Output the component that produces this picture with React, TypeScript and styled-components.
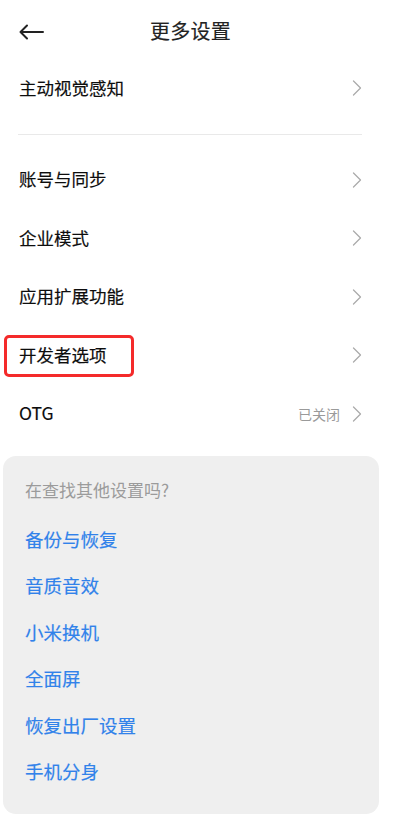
import React from "react";
import styled, { createGlobalStyle } from "styled-components";

const Global = createGlobalStyle`
  html, body { margin: 0; padding: 0; background: #ffffff; }
  body { font-family: "Noto Sans CJK SC", "Noto Sans", Roboto, sans-serif; -webkit-font-smoothing: antialiased; }
  * { box-sizing: border-box; }
`;

const Page = styled.div`
  width: 400px;
  min-height: 822px;
  background: #ffffff;
  display: flex;
  flex-direction: column;
`;

const Header = styled.header`
  height: 58px;
  display: grid;
  grid-template-columns: 60px 1fr 60px;
  align-items: center;
  padding: 3px 19px 0 0;
`;

const BackButton = styled.div`
  padding-left: 19px;
  display: flex;
  align-items: center;
  margin-top: 2px;
`;

const Title = styled.div`
  text-align: center;
  font-size: 20px;
  color: #222222;
  letter-spacing: 0.3px;
  -webkit-text-stroke: 0.15px #222222;
`;

const Section = styled.div`
  display: flex;
  flex-direction: column;
  padding: 0 38px 0 19px;
`;

const Row = styled.div`
  position: relative;
  height: 58.5px;
  display: flex;
  align-items: center;
  justify-content: space-between;
`;

const Label = styled.span`
  font-size: 17.5px;
  color: #0d0d0d;
  -webkit-text-stroke: 0.18px #0d0d0d;
`;

const Right = styled.div`
  display: flex;
  align-items: center;
  gap: 12px;
  margin-top: 2px;
`;

const Value = styled.span`
  font-size: 14px;
  color: #9a9a9a;
`;

const Divider = styled.div`
  height: 1px;
  background: #e9e9e9;
  margin: 17px 0 15px -1px;
`;

const Highlight = styled.div`
  position: absolute;
  left: -15px;
  top: 9.5px;
  width: 130px;
  height: 42px;
  border: 3px solid #f42a2a;
  border-radius: 5px;
  pointer-events: none;
`;

const Card = styled.div`
  margin: 13.5px 21px 0 3px;
  background: #efefef;
  border-radius: 13px;
  padding: 11px 22px 19px 22px;
  display: flex;
  flex-direction: column;
`;

const CardTitle = styled.div`
  height: 46px;
  display: flex;
  align-items: center;
  font-size: 17px;
  color: #9b9b9b;
  margin-bottom: 3px;
`;

const LinkItem = styled.div`
  height: 46.5px;
  display: flex;
  align-items: center;
  font-size: 18.5px;
  color: #3182ea;
  -webkit-text-stroke: 0.18px #3182ea;
`;

const Chevron = () => (
  <svg width="10" height="16" viewBox="0 0 10 16" fill="none">
    <path d="M1.5 1 L8.5 8 L1.5 15" stroke="#ababab" strokeWidth="1.3" strokeLinecap="round" strokeLinejoin="round" />
  </svg>
);

const BackArrow = () => (
  <svg width="25" height="16" viewBox="0 0 25 16" fill="none">
    <path d="M1.5 8 H24 M8 1.5 L1.5 8 L8 14.5" stroke="#222" strokeWidth="2" strokeLinecap="round" strokeLinejoin="round" />
  </svg>
);

const rows: { label: string; value?: string; highlight?: boolean }[] = [
  { label: "账号与同步" },
  { label: "企业模式" },
  { label: "应用扩展功能" },
  { label: "开发者选项", highlight: true },
  { label: "OTG", value: "已关闭" },
];

const links = ["备份与恢复", "音质音效", "小米换机", "全面屏", "恢复出厂设置", "手机分身"];

export default function App() {
  return (
    <>
      <Global />
      <Page>
        <Header>
          <BackButton>
            <BackArrow />
          </BackButton>
          <Title>更多设置</Title>
          <div />
        </Header>
        <Section>
          <Row>
            <Label>主动视觉感知</Label>
            <Right>
              <Chevron />
            </Right>
          </Row>
          <Divider />
          {rows.map((r) => (
            <Row key={r.label}>
              <Label>{r.label}</Label>
              <Right>
                {r.value && <Value>{r.value}</Value>}
                <Chevron />
              </Right>
              {r.highlight && <Highlight />}
            </Row>
          ))}
        </Section>
        <Card>
          <CardTitle>在查找其他设置吗?</CardTitle>
          {links.map((l) => (
            <LinkItem key={l}>{l}</LinkItem>
          ))}
        </Card>
      </Page>
    </>
  );
}
